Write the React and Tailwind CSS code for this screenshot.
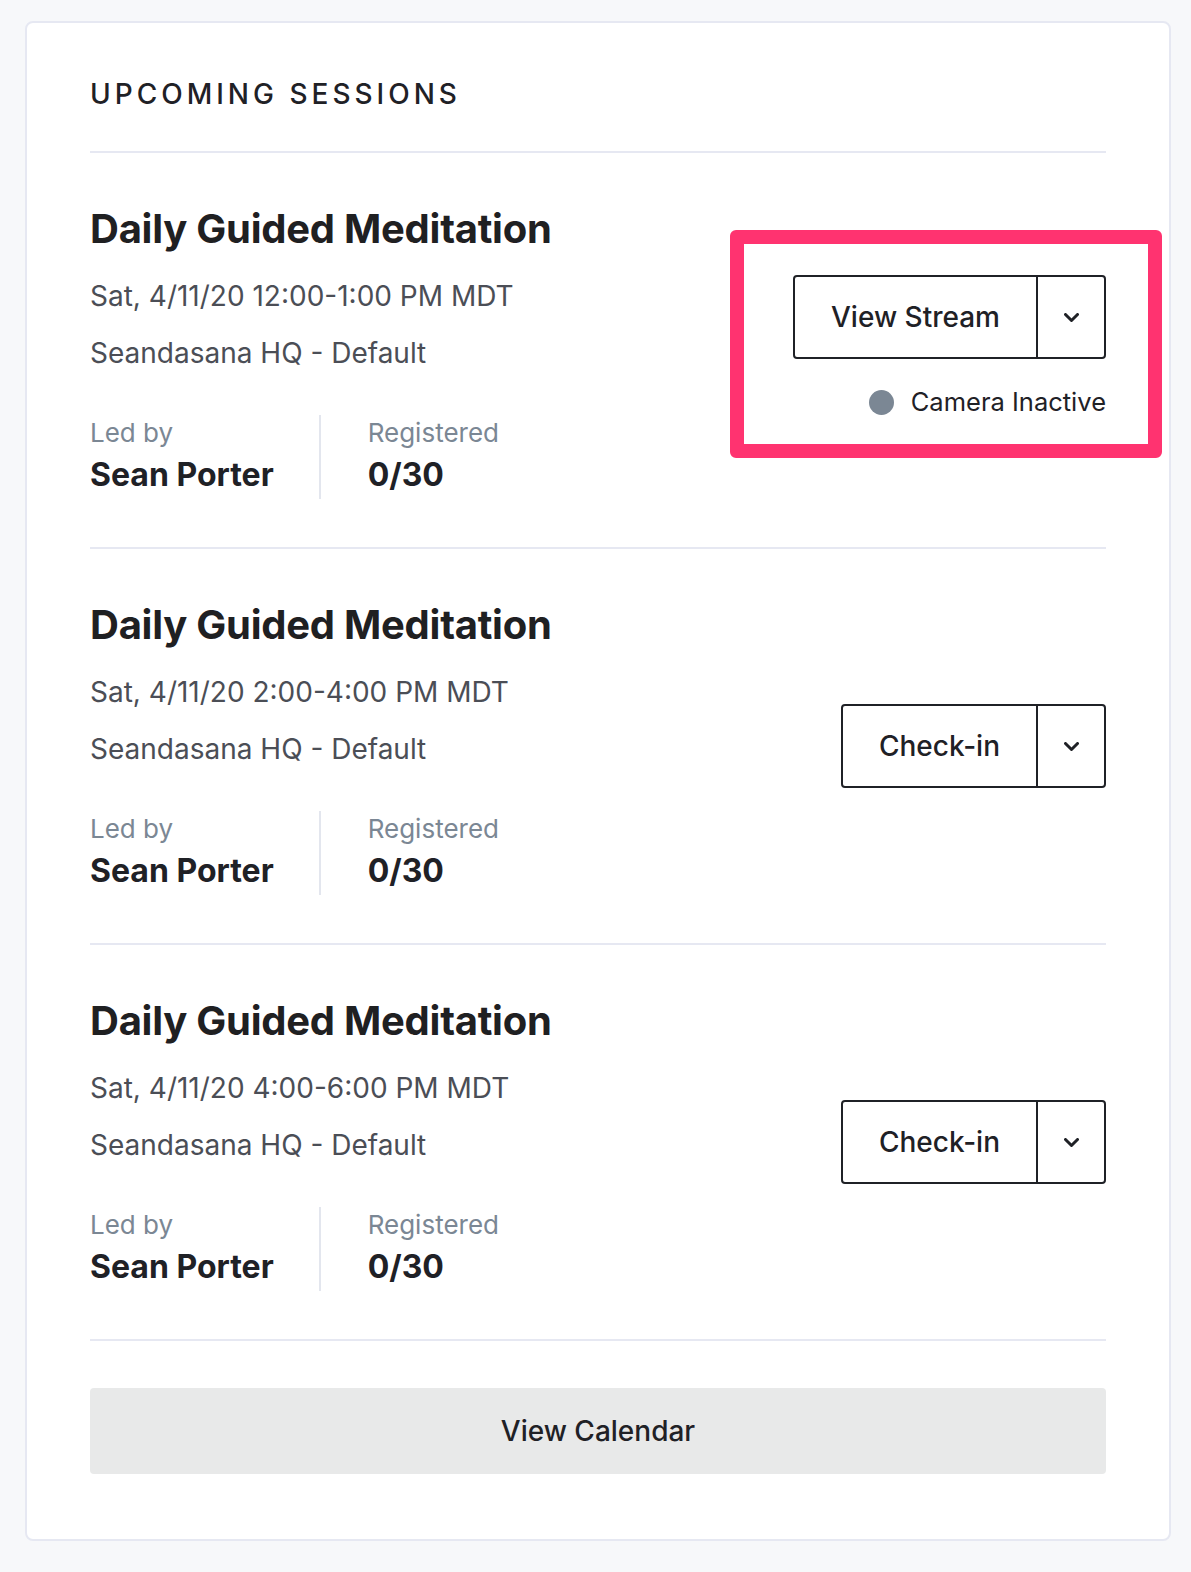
const sessions = [
  { time: "Sat, 4/11/20 12:00-1:00 PM MDT", action: "View Stream", stream: true },
  { time: "Sat, 4/11/20 2:00-4:00 PM MDT", action: "Check-in" },
  { time: "Sat, 4/11/20 4:00-6:00 PM MDT", action: "Check-in" },
];

const Chevron = () => (
  <svg width="15" height="9" viewBox="0 0 15 9" fill="none">
    <path d="M1.5 1.5L7.5 7.5L13.5 1.5" stroke="currentColor" strokeWidth="3" strokeLinecap="round" strokeLinejoin="round" />
  </svg>
);

const SplitButton = ({ label }) => (
  <div className="flex h-[84px] rounded-[4px] border-2 border-[#1f2126] text-[#1f2126]">
    <button type="button" className="px-[36px] text-[28px] leading-[80px] font-medium">
      {label}
    </button>
    <button type="button" className="w-[68px] border-l-2 border-[#1f2126] flex items-center justify-center">
      <Chevron />
    </button>
  </div>
);

const SessionRow = ({ session }) => (
  <div className="flex items-center justify-between py-[48px]">
    <div>
      <h3 className="text-[40px] leading-[56px] font-bold tracking-[-0.25px] text-[#1f2022]">Daily Guided Meditation</h3>
      <p className="mt-[18px] text-[28px] leading-[42px] text-[#4b4e56]">{session.time}</p>
      <p className="mt-[15px] text-[28px] leading-[42px] text-[#4b4e56]">Seandasana HQ - Default</p>
      <div className="mt-[41px] flex">
        <div className="pr-[45px]">
          <div className="text-[26px] leading-[36px] text-[#7b8794]">Led by</div>
          <div className="text-[32px] leading-[48px] font-bold text-[#1f2126]">Sean Porter</div>
        </div>
        <div className="border-l-2 border-[#e3e6ee] pl-[47px]">
          <div className="text-[26px] leading-[36px] text-[#7b8794]">Registered</div>
          <div className="text-[32px] leading-[48px] font-bold text-[#1f2126]">0/30</div>
        </div>
      </div>
    </div>
    {session.stream ? (
      <div className="relative flex flex-col items-end pb-[4px]">
        <div className="pointer-events-none absolute -top-[45px] -left-[63px] w-[432px] h-[228px] rounded-[6px] border-[14px] border-[#ff3370]" />
        <SplitButton label={session.action} />
        <div className="mt-[24px] flex items-center gap-[17px]">
          <span className="h-[25px] w-[25px] rounded-full bg-[#7b8794]" />
          <span className="text-[25.5px] leading-[38px] text-[#1f2126]">Camera Inactive</span>
        </div>
      </div>
    ) : (
      <SplitButton label={session.action} />
    )}
  </div>
);

export default function App() {
  return (
    <div className="min-h-screen bg-[#f7f8fa] pt-[21px] pb-[33px] font-['Inter','Liberation_Sans',sans-serif]">
      <div className="ml-[25px] w-[1146px] rounded-[8px] border-2 border-[#e6e8f2] bg-white px-[63px] pt-[51px] pb-[65px]">
        <h2 className="text-[28px] leading-[40px] font-medium tracking-[4px] text-[#1f2126] mb-[37px]">
          UPCOMING SESSIONS
        </h2>
        <div className="border-t-2 border-[#e6e8f2]">
          {sessions.map((s, i) => (
            <div key={i} className="border-b-2 border-[#e6e8f2]">
              <SessionRow session={s} />
            </div>
          ))}
        </div>
        <button
          type="button"
          className="mt-[47px] w-full h-[86px] rounded-[4px] bg-[#e8e9e9] text-[28px] font-medium text-[#1f2126]"
        >
          View Calendar
        </button>
      </div>
    </div>
  );
}
